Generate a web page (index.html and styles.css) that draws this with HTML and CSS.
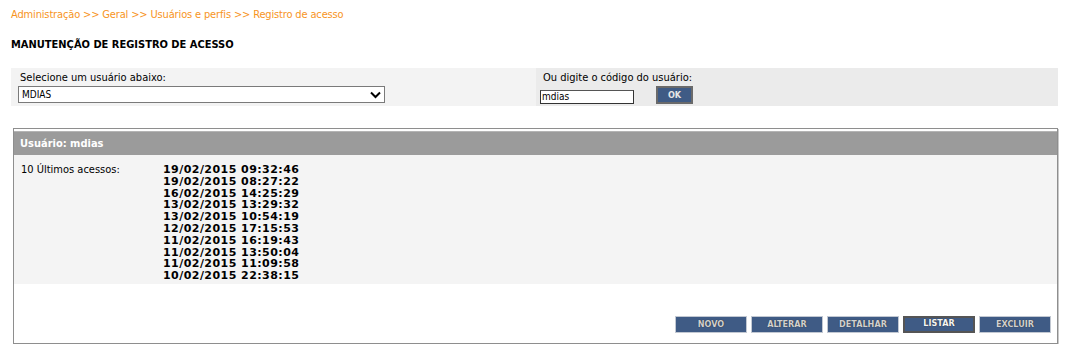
FILE: index.html
```html
<!DOCTYPE html>
<html lang="pt">
<head>
<meta charset="utf-8">
<title>Registro de acesso</title>
<link rel="stylesheet" href="styles.css">
</head>
<body>
<div class="page">
  <div class="breadcrumb">Administração &gt;&gt; Geral &gt;&gt; Usuários e perfis &gt;&gt; Registro de acesso</div>
  <h1 class="title">MANUTENÇÃO DE REGISTRO DE ACESSO</h1>
  <div class="filters">
    <div class="cell cell-left">
      <label class="lbl">Selecione um usuário abaixo:</label>
      <div class="select">
        <span>MDIAS</span>
        <svg class="chev" width="11" height="8" viewBox="0 0 11 8"><path d="M1 1.5 L5.5 6 L10 1.5" fill="none" stroke="#000" stroke-width="2"/></svg>
      </div>
    </div>
    <div class="cell cell-right">
      <label class="lbl">Ou digite o código do usuário:</label>
      <div class="row">
        <div class="input">mdias</div>
        <div class="ok">OK</div>
      </div>
    </div>
  </div>
  <div class="panel">
    <div class="panel-head">Usuário: mdias</div>
    <div class="panel-body">
      <div class="acc-label">10 Últimos acessos:</div>
      <div class="dates">
        <div>19/02/2015 09:32:46</div>
        <div>19/02/2015 08:27:22</div>
        <div>16/02/2015 14:25:29</div>
        <div>13/02/2015 13:29:32</div>
        <div>13/02/2015 10:54:19</div>
        <div>12/02/2015 17:15:53</div>
        <div>11/02/2015 16:19:43</div>
        <div>11/02/2015 13:50:04</div>
        <div>11/02/2015 11:09:58</div>
        <div>10/02/2015 22:38:15</div>
      </div>
    </div>
    <div class="actions">
      <div class="btn">NOVO</div>
      <div class="btn">ALTERAR</div>
      <div class="btn">DETALHAR</div>
      <div class="btn btn-active">LISTAR</div>
      <div class="btn">EXCLUIR</div>
    </div>
  </div>
</div>
</body>
</html>
```
FILE: styles.css
```css
* { box-sizing: border-box; }
body { margin: 0; background: #fff; font-family: "DejaVu Sans Condensed", "DejaVu Sans", sans-serif; font-size: 11px; color: #000; }
.page { padding: 8px 10px 0 11px; width: 1068px; }
.breadcrumb { color: #f7941d; font-size: 11px; line-height: 14px; letter-spacing: -0.15px; }
.title { margin: 16px 0 0 0; font-size: 11px; font-weight: bold; line-height: 14px; }
.filters { display: flex; margin-top: 16px; height: 38px; width: 1047px; }
.cell { padding: 3px 7px 0 9px; }
.cell-left { width: 525px; background: #f3f3f3; }
.cell-right { flex: 1; background: #ebebeb; padding-left: 7px; }
.lbl { display: block; line-height: 14px; font-size: 11px; }
.select { margin: 1px 0 0 -2px; width: 367px; height: 17px; border: 1px solid #7a7a7a; background: #fff; display: flex; align-items: center; justify-content: space-between; padding: 0 3px 0 3px; font-size: 10px; }
.chev { margin-top: 1px; }
.row { display: flex; align-items: flex-end; gap: 22px; margin: 1px 0 0 -3px; }
.input { width: 94px; height: 14px; border: 1px solid #333; border-top-color: #555; background: #fff; font-size: 10px; line-height: 12px; padding-left: 1px; margin-top: 4px; }
.ok { width: 37px; height: 18px; background: #3f5b85; border: 2px solid #6a6a6a; color: #e6e6e6; font-weight: bold; font-size: 9px; text-align: center; line-height: 14px; }
.panel { margin: 22px 0 0 2px; width: 1045px; height: 216px; border: 1px solid #8e8e8e; box-shadow: 1px 1px 0 #c9c9c9; display: flex; flex-direction: column; background: #fff; }
.panel-head { margin-top: 2px; height: 24px; background: #9b9b9b; border-top: 1px solid #b4b4b4; color: #fff; font-weight: bold; font-size: 11px; line-height: 24px; padding-left: 6px; }
.panel-body { height: 129px; background: #f4f4f4; display: flex; padding: 8px 0 0 7px; }
.acc-label { width: 142px; line-height: 14px; }
.dates { font-family: "DejaVu Sans", sans-serif; font-weight: bold; font-size: 11px; letter-spacing: 0.45px; line-height: 11.8px; margin-top: 1px; }
.actions { display: flex; justify-content: flex-end; gap: 4px; padding: 32px 6px 0 0; }
.btn { width: 72px; height: 17px; background: #3f5b85; border: 1px solid #c2c8d2; color: #d0d0d0; font-weight: bold; font-size: 9px; text-align: center; line-height: 15px; text-shadow: 0 0 1px #222; }
.btn-active { border: 2px solid #555; color: #f4f4f4; line-height: 11px; }
```
